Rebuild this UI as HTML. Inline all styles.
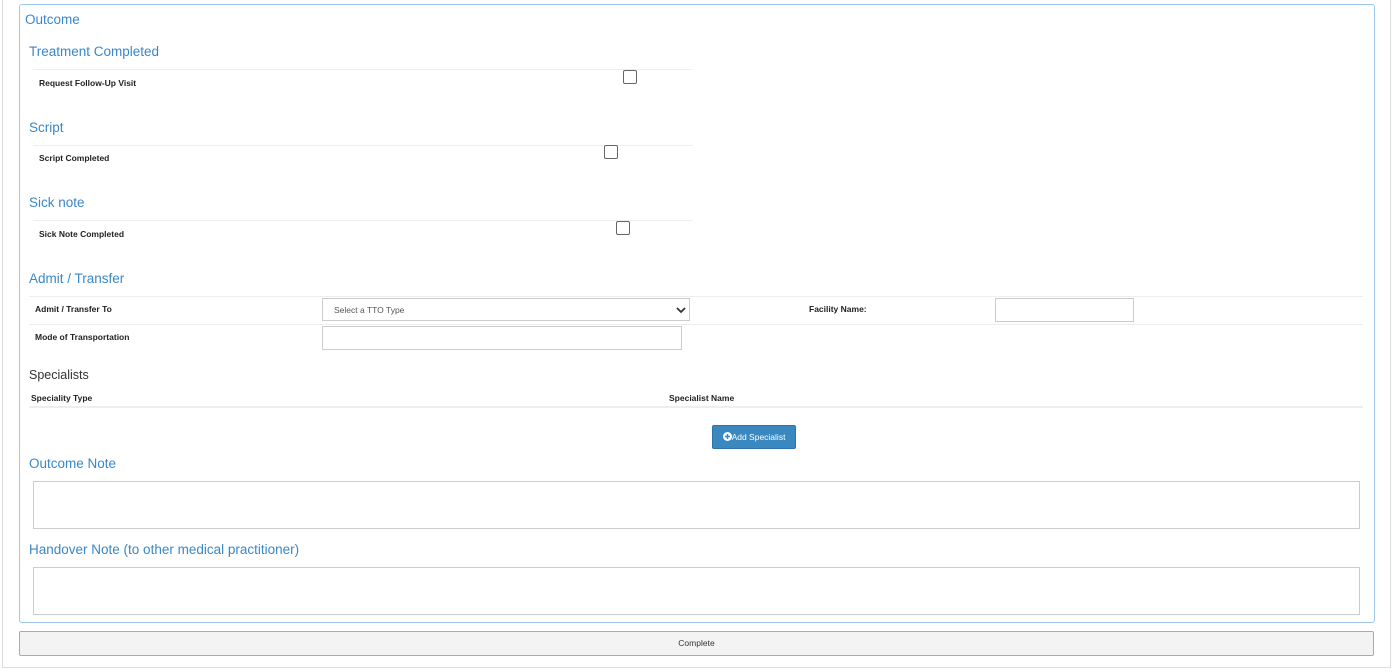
<!DOCTYPE html>
<html><head><meta charset="utf-8"><style>
body{margin:0;width:1393px;height:672px;background:#fff;font-family:"Liberation Sans",sans-serif;position:relative;overflow:hidden}
.a{position:absolute}
.outer{left:2px;top:-2px;width:1387px;height:669px;border:1px solid #ddd;border-top:none}
.panel{left:19px;top:4px;width:1354px;height:617px;border:1px solid #9cc8ee;border-radius:3px}
.h{color:#3a87c8;font-size:13.5px}
.l{font-size:8.5px;font-weight:bold;color:#222}
.hr{height:1px;background:#eee}
.cb{width:12px;height:12px;border:1px solid #666;border-radius:2px;background:#fff}
.in{border:1px solid #ccc;background:#fff}
</style></head><body>
<div class="a outer"></div>
<div class="a panel"></div>
<div class="a h" style="left:25px;top:12px">Outcome</div>
<div class="a h" style="left:29px;top:44px">Treatment Completed</div>
<div class="a hr" style="left:33px;top:69px;width:660px"></div>
<div class="a l" style="left:39px;top:78px">Request Follow-Up Visit</div>
<div class="a cb" style="left:623px;top:70px"></div>
<div class="a h" style="left:29px;top:120px">Script</div>
<div class="a hr" style="left:33px;top:145px;width:660px"></div>
<div class="a l" style="left:39px;top:153px">Script Completed</div>
<div class="a cb" style="left:604px;top:145px"></div>
<div class="a h" style="left:29px;top:195px">Sick note</div>
<div class="a hr" style="left:33px;top:220px;width:660px"></div>
<div class="a l" style="left:39px;top:229px">Sick Note Completed</div>
<div class="a cb" style="left:616px;top:221px"></div>
<div class="a h" style="left:29px;top:271px">Admit / Transfer</div>
<div class="a hr" style="left:29px;top:296px;width:1334px"></div>
<div class="a l" style="left:35px;top:304px">Admit / Transfer To</div>
<div class="a in" style="left:322px;top:298px;width:368px;height:23px;font-size:8.5px;color:#555;line-height:22px;padding-left:11px;box-sizing:border-box">Select a TTO Type<svg style="position:absolute;right:3px;top:7px" width="10" height="8" viewBox="0 0 10 8"><path d="M1 2 L5 6 L9 2" stroke="#333" stroke-width="1.8" fill="none"/></svg></div>
<div class="a l" style="left:809px;top:304px">Facility Name:</div>
<div class="a in" style="left:995px;top:298px;width:137px;height:22px"></div>
<div class="a hr" style="left:29px;top:324px;width:1334px"></div>
<div class="a l" style="left:35px;top:332px">Mode of Transportation</div>
<div class="a in" style="left:322px;top:326px;width:358px;height:22px"></div>
<div class="a" style="left:29px;top:368px;font-size:12.5px;color:#333">Specialists</div>
<div class="a l" style="left:31px;top:393px">Speciality Type</div>
<div class="a l" style="left:669px;top:393px">Specialist Name</div>
<div class="a" style="left:29px;top:406px;width:1334px;height:2px;background:#eee"></div>
<div class="a" style="left:712px;top:425px;width:84px;height:24px;background:#3a88c0;border:1px solid #2f73a6;border-radius:2px;box-sizing:border-box;color:#fff;font-size:8.5px;line-height:22px;text-align:center"><svg width="9" height="9" viewBox="0 0 10 10" style="vertical-align:-1px"><circle cx="5" cy="5" r="5" fill="#fff"/><path d="M5 2.2V7.8M2.2 5H7.8" stroke="#3a88c0" stroke-width="1.6"/></svg>Add Specialist</div>
<div class="a h" style="left:29px;top:456px">Outcome Note</div>
<div class="a in" style="left:33px;top:481px;width:1325px;height:46px"></div>
<div class="a h" style="left:29px;top:542px">Handover Note (to other medical practitioner)</div>
<div class="a in" style="left:33px;top:567px;width:1325px;height:46px"></div>
<div class="a" style="left:19px;top:631px;width:1355px;height:25px;background:#f3f3f3;border:1px solid #c9a86a;border-radius:2px;box-sizing:border-box;text-align:center;font-size:8.5px;line-height:23px;color:#333">Complete</div>
</body></html>
